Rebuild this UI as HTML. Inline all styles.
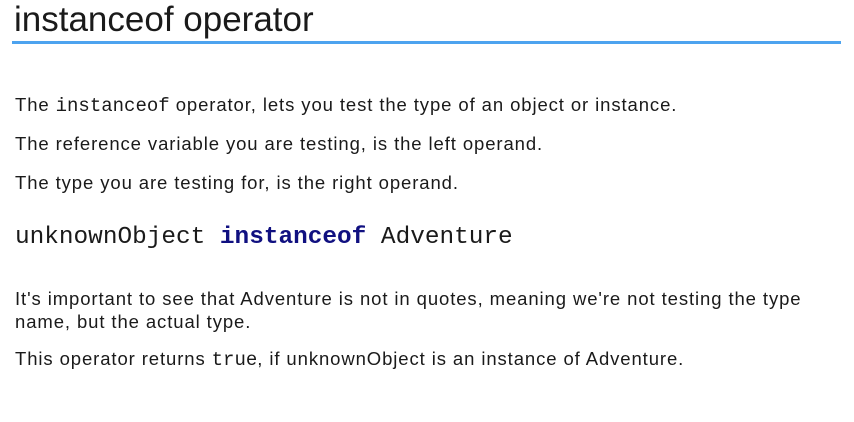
<!DOCTYPE html>
<html><head><meta charset="utf-8"><style>
body{margin:0;width:854px;height:422px;background:#fff;color:#1a1a1a;font-family:"Liberation Sans",sans-serif;position:relative;overflow:hidden}
.t{position:absolute;left:14px;top:0px;font-size:35px;white-space:nowrap}
.hr{position:absolute;left:12px;top:41px;width:829px;height:3px;background:#4da3ef}
.p{position:absolute;left:15px;font-size:18.5px;white-space:nowrap;letter-spacing:0.9px}
code{font-family:"Liberation Mono",monospace;font-size:19px;letter-spacing:0}
.c{position:absolute;left:15px;top:224px;font-family:"Liberation Mono",monospace;font-size:24.4px;white-space:nowrap}
.c b{color:#101080}
</style></head><body>
<div class="t">instanceof operator</div>
<div class="hr"></div>
<div class="p" style="top:94px">The <code>instanceof</code> operator, lets you test the type of an object or instance.</div>
<div class="p" style="top:133px">The reference variable you are testing, is the left operand.</div>
<div class="p" style="top:172px">The type you are testing for, is the right operand.</div>
<div class="c">unknownObject <b>instanceof</b> Adventure</div>
<div class="p" style="top:288px">It's important to see that Adventure is not in quotes, meaning we're not testing the type</div>
<div class="p" style="top:311px">name, but the actual type.</div>
<div class="p" style="top:348px">This operator returns <code>true</code>, if unknownObject is an instance of Adventure.</div>
</body></html>
